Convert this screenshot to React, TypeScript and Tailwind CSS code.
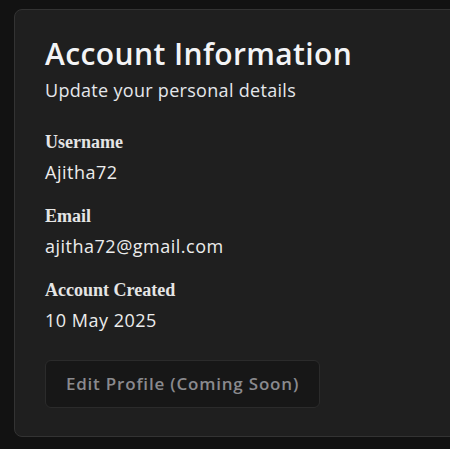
export default function App() {
  const sans = { fontFamily: '"Open Sans", "DejaVu Sans", sans-serif' };
  return (
    <div className="min-h-screen bg-[#121212] pt-[9px] pl-[14px] overflow-hidden" style={sans}>
      <div className="w-[470px] h-[428px] rounded-lg border border-[#333333] bg-[#1f1f1f] px-[30px] pt-[26px]">
        <h1 className="text-[30px] leading-9 font-semibold tracking-[0.4px] text-[#f3f4f6]">Account Information</h1>
        <p className="mt-1 text-lg tracking-[0.3px] text-[#e5e7eb]">Update your personal details</p>

        <div className="mt-6 flex flex-col gap-4">
          <div>
            <div className="font-['Liberation_Serif',serif] text-lg font-bold text-[#e5e5e5]">Username</div>
            <div className="mt-[2px] text-lg tracking-[0.5px] text-[#ececec]">Ajitha72</div>
          </div>
          <div>
            <div className="font-['Liberation_Serif',serif] text-lg font-bold text-[#e5e5e5]">Email</div>
            <div className="mt-[2px] text-lg tracking-[0.5px] text-[#ececec]">ajitha72@gmail.com</div>
          </div>
          <div>
            <div className="font-['Liberation_Serif',serif] text-lg font-bold text-[#e5e5e5]">Account Created</div>
            <div className="mt-[2px] text-lg tracking-[0.5px] text-[#ececec]">10 May 2025</div>
          </div>
        </div>

        <button
          disabled
          className="mt-[26px] h-12 w-[275px] rounded-md border border-[#2b2b2b] bg-[#171717] text-[17px] font-semibold tracking-[0.8px] text-[#8a8a8e]"
        >
          Edit Profile (Coming Soon)
        </button>
      </div>
    </div>
  );
}
